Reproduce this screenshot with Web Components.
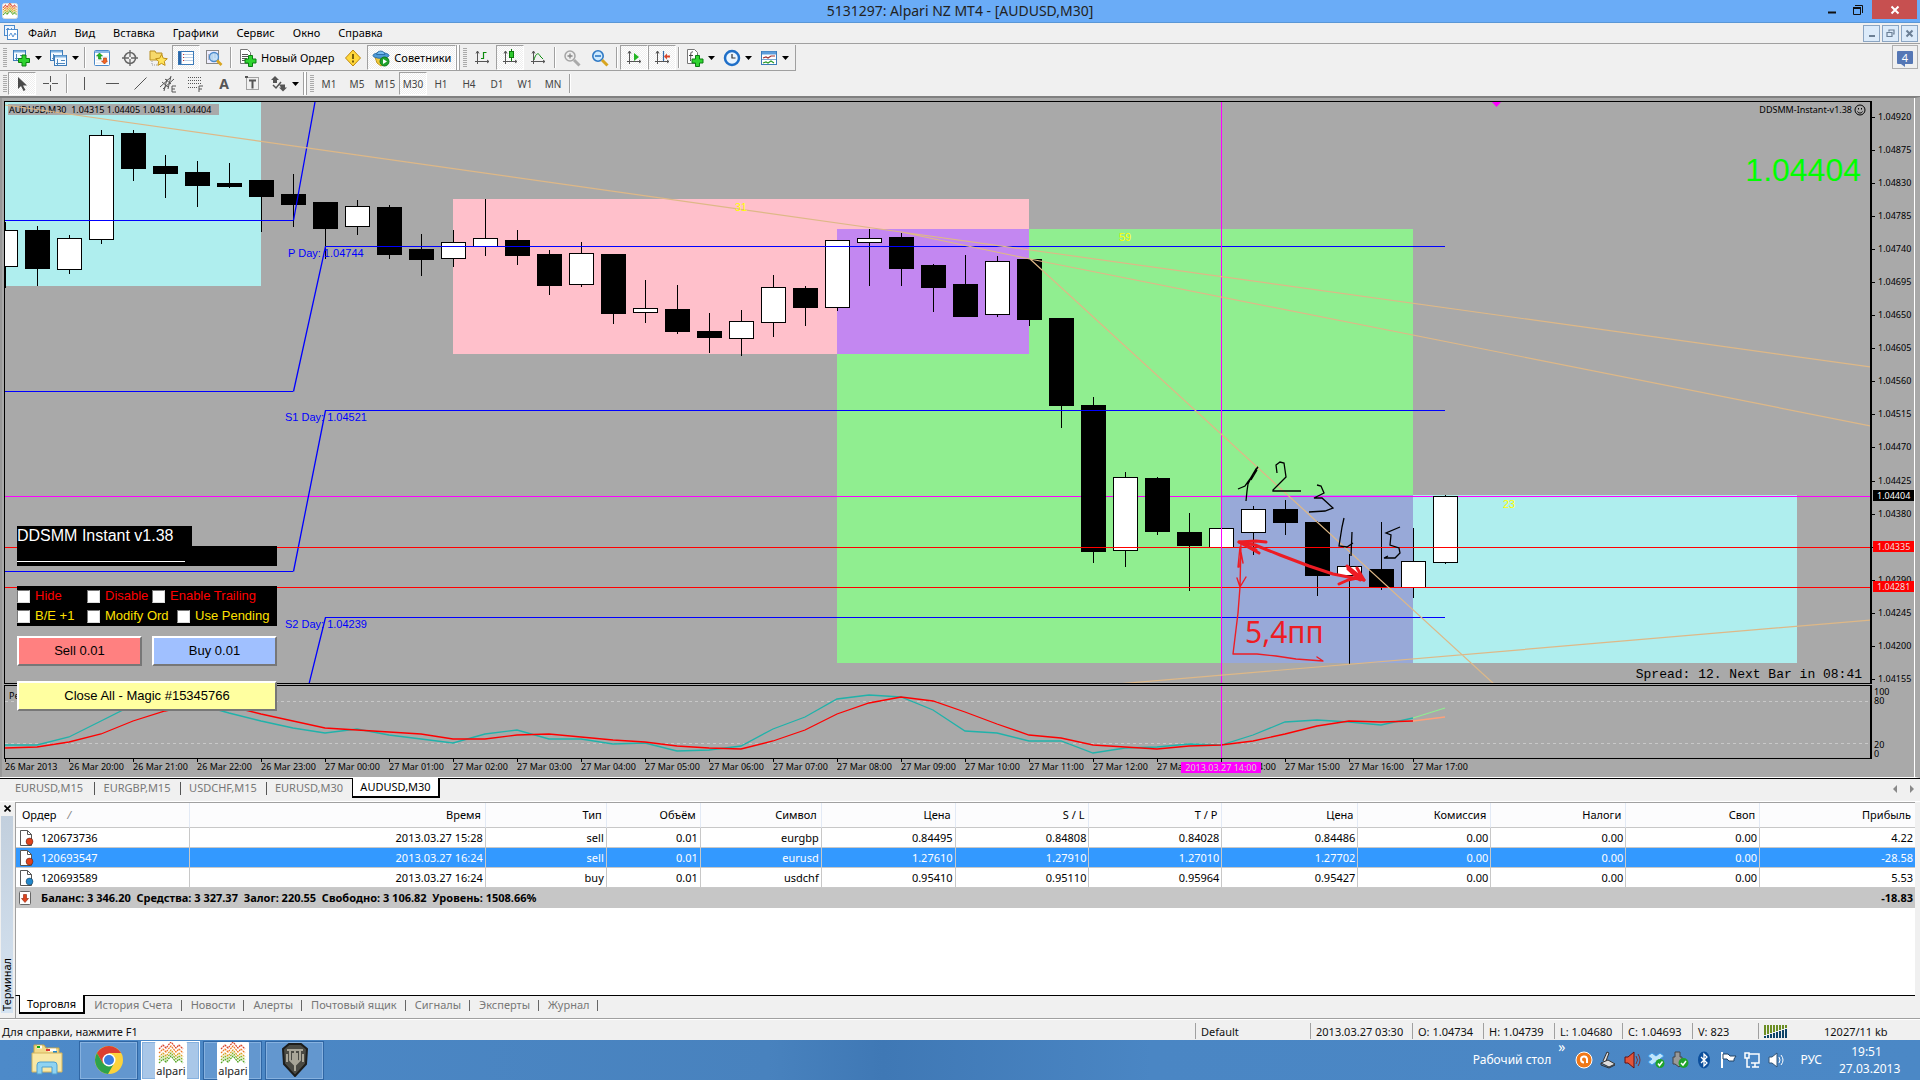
<!DOCTYPE html>
<html lang="ru">
<head>
<meta charset="utf-8">
<title>5131297: Alpari NZ MT4 - [AUDUSD,M30]</title>
<style>
html{height:100%}
body{margin:0;min-height:100%;display:flex;flex-direction:column;background:#f0f0f0;color:#000;font:11px/14px "Noto Sans","Open Sans",sans-serif;overflow:hidden}
trade-terminal{flex:1}
</style>
</head>
<body>
<window-title>5131297: Alpari NZ MT4 - [AUDUSD,M30]</window-title>
<menu-bar></menu-bar>
<main-toolbar></main-toolbar>
<draw-toolbar></draw-toolbar>
<chart-window><expert-panel></expert-panel></chart-window>
<chart-tabs></chart-tabs>
<trade-terminal><orders-table></orders-table></trade-terminal>
<status-bar></status-bar>
<task-bar></task-bar>
<script>
const BASE = `:host,*{box-sizing:border-box}button{font:inherit;color:inherit;background:none;border:0;margin:0;padding:0;cursor:default;white-space:nowrap}svg{display:block;flex:none}`;
function define(name, css, html) {
  customElements.define(name, class extends HTMLElement {
    constructor() {
      super();
      const t = document.createElement('template');
      t.innerHTML = `<style>${BASE}${css}</style>${typeof html === 'function' ? html() : html}`;
      this.attachShadow({mode: 'open'}).append(t.content.cloneNode(true));
    }
  });
}
const svg = (w, h, body, extra = '') => `<svg width="${w}" height="${h}" viewBox="0 0 ${w} ${h}" fill="none" aria-hidden="true" ${extra}>${body}</svg>`;

/* ---------- icons ---------- */
const plus = (x, y) => `<path d="M${x+3} ${y}h4v3.500h3.500v4h-3.500v3.500h-4v-3.500h-3.500v-4h3.500z" fill="#2fd42f" stroke="#0a7d12"/>`;
const win = (x, y) => `<rect x="${x+.5}" y="${y+.5}" width="12" height="10" fill="#f5faff" stroke="#3b7ab8"/><path d="M${x+1} ${y+1.5}h11" stroke="#7fb2e0" stroke-width="2"/><path d="M${x+3.5} ${y+4}v6M${x+2} ${y+8.500}h9M${x+7} ${y+5.500}h4" stroke="#4e87bd"/>`;
const axes = `<path d="M3.500 2v13M1 12.500h14M2 4.500l1.500-2.500 1.500 2.500M13 11l2 1.500-2 1.500" stroke="#555"/>`;
const zig = (y, c, w) => `<path d="M2 ${y+5}l4-4 3 3 5-6 5 6 3-3 4 4" stroke="${c}" stroke-width="${w}" stroke-dasharray="2 .7"/>`;
const ICON = {
  newChart: svg(19,18, win(1,1)+plus(7,6)),
  windows: svg(19,18, win(1,1)+win(5,6)),
  market: svg(18,18, `<rect x="1.500" y="1.500" width="15" height="15" rx="1" fill="#fff" stroke="#4b8acb"/><path d="M2 3h14" stroke="#8dbbe8" stroke-width="2"/><path d="M3 8h12M3 11h12M3 14h12" stroke="#e0e4e8"/><path d="M6.500 4l3 3h-2v2l1 1h-3V7h-2z" fill="#22b922" stroke="#0c7f10" stroke-width=".6"/><path d="M11.500 15l-3-3h2v-3h3v3h1z" fill="#f26522" stroke="#b5340a" stroke-width=".6"/>`),
  target: svg(18,18, `<circle cx="9" cy="9" r="5.500" stroke="#666" stroke-width="1.500"/><path d="M9 1v7M9 10v7M1 9h7M10 9h7" stroke="#666" stroke-width="1.300"/>`),
  folder: svg(19,18, `<path d="M1 2h5l1 2h6v7H1z" fill="#f6d96b" stroke="#b99025"/><path d="M3 12v4h6" stroke="#999" stroke-dasharray="1 1"/><path d="M12.500 5.500l1.800 3.700 4 .5-3 2.700.8 4-3.600-2-3.600 2 .8-4-3-2.700 4-.5z" fill="#ffe45c" stroke="#c09018"/>`),
  navigator: svg(18,18, `<rect x="1.500" y="2.500" width="15" height="13" fill="#fff" stroke="#3b7ab8"/><path d="M3 3v12" stroke="#2a66a8" stroke-width="3"/><path d="M6 5.500h10M6 8.500h10M6 11.500h10" stroke="#b9cfe5"/><path d="M6.500 5v8" stroke="#c33" stroke-dasharray="1 2"/>`),
  tester: svg(18,18, `<rect x="1.500" y="1.500" width="12" height="13" fill="#eef" stroke="#888"/><path d="M4 11V5M7 12V4M10 9V3" stroke="#888"/><circle cx="9" cy="8" r="4.500" fill="#b9dcf7" fill-opacity=".8" stroke="#4b8acb" stroke-width="1.300"/><path d="M12 11.500l4.500 4.500" stroke="#d8a520" stroke-width="2.600"/>`),
  order: svg(18,18, `<path d="M1.500.500h7l3 3v11h-10z" fill="#fff" stroke="#777"/><path d="M3 5.500h6M3 7.500h6M3 9.500h5M3 11.500h3" stroke="#555"/>`+plus(6.5,6.5)),
  warn: svg(18,18, `<path d="M9 1l7.500 8L9 17 1.500 9z" fill="#ffd83b" stroke="#c0880c"/><path d="M9 5v5M9 11.500v2" stroke="#5a4300" stroke-width="1.600"/>`),
  expert: svg(18,18, `<path d="M3 8l2 6 4 3 5-3 1-6z" fill="#f0c83c" stroke="#c39a1e"/><ellipse cx="9" cy="6.500" rx="8" ry="2.800" fill="#4d9ad8" stroke="#2b6ea6"/><path d="M4.500 5.500C5 1 12.500 1 13 5.500z" fill="#76bdf0" stroke="#2b6ea6"/><circle cx="12.500" cy="12.500" r="4.500" fill="#1fa32b" stroke="#0d7a18"/><path d="M11 10l4 2.500-4 2.500z" fill="#fff"/>`),
  bars: svg(17,17, axes+`<path d="M9.500 3v7M9.500 3.500h3M7 9.500h2.500" stroke="#0b8a0b" stroke-width="1.200"/>`),
  candles: svg(17,17, axes+`<path d="M9.500 0v12" stroke="#0b7a0b"/><rect x="7.500" y="2.500" width="4" height="6" fill="#2ec82e" stroke="#0b7a0b"/>`),
  line: svg(17,17, axes+`<path d="M4 11c2-8 5-7 6-4l3 3" stroke="#0b8a0b"/>`),
  zoomIn: svg(18,18, `<circle cx="7" cy="7" r="5" fill="#eee" stroke="#a5a5a5" stroke-width="1.500"/><path d="M4.500 7h5M7 4.500v5" stroke="#888" stroke-width="1.300"/><path d="M11 11l5.500 5.500" stroke="#aaa" stroke-width="3"/>`),
  zoomOut: svg(18,18, `<circle cx="7" cy="7" r="5.200" fill="#cdeaff" stroke="#2f79c4" stroke-width="1.600"/><path d="M4 7h6" stroke="#2f79c4" stroke-width="1.600"/><path d="M11 11l5.500 5.500" stroke="#d8a520" stroke-width="3"/>`),
  scroll: svg(17,17, axes+`<path d="M8 4l5 4-5 4z" fill="#23b623"/>`),
  shift: svg(17,17, axes+`<path d="M9.500 2v10" stroke="#336ba8" stroke-width="1.200"/><path d="M10 7.500l3-3v2h3v2h-3v2z" fill="#d8442a"/>`),
  indicator: svg(18,18, `<path d="M1.500.500h7l3 3v11h-10z" fill="#fff" stroke="#777"/><path d="M7 3c-3-1-2 3-2.500 9M3 6.500h4" stroke="#444"/>`+plus(6.5,6.5)),
  clock: svg(18,18, `<circle cx="9" cy="9" r="7" fill="#eaf5ff" stroke="#1f6fc8" stroke-width="2.500"/><path d="M9 5v4h3.500" stroke="#333" stroke-width="1.200"/>`),
  template: svg(18,18, `<rect x="1.500" y="2.500" width="15" height="13" fill="#fff" stroke="#3b7ab8"/><path d="M2 4h14" stroke="#5d9ddb" stroke-width="3"/><path d="M3 9l3-1 2 1 3-2 4 0" stroke="#a03030" stroke-width="1.200"/><path d="M2 10.500h14" stroke="#7aa7d2"/><path d="M3 14l3-1 2 1 3-2 3 2" stroke="#2a9a2a" stroke-width="1.200"/>`),
  cursor: svg(16,18, `<path d="M4 2v12l3-3 2.500 5 2-1L9 10.500h4z" fill="#4a4a4a"/>`),
  cross: svg(17,17, `<path d="M8.500 1v6M8.500 10v6M1 8.500h6M10 8.500h6" stroke="#555"/>`),
  vline: svg(17,17, `<path d="M8.500 2v13" stroke="#555"/>`),
  hline: svg(17,17, `<path d="M2 8.500h13" stroke="#555"/>`),
  tline: svg(17,17, `<path d="M2.500 14.500l12-12" stroke="#555"/>`),
  channel: svg(19,18, `<path d="M1 12l11-10M4 14L15 4M3 7l6 5M6 4l6 5M5 16l3-12M9 14l3-13" stroke="#555"/><path d="M17 11h-4v6h4M13 14h3" stroke="#555"/>`),
  fibo: svg(18,18, `<path d="M1 2.500h14M1 5.500h14M1 8.500h14M1 12.500h9" stroke="#555" stroke-dasharray="1 1"/><path d="M16 11h-4v6M12 14h3" stroke="#555"/>`),
  label: svg(17,17, `<rect x="2.500" y="2.500" width="12" height="12" stroke="#555" stroke-dasharray="1 1"/><path d="M5 5.500h7M8.500 5.500v8" stroke="#555" stroke-width="2"/><path d="M1 1h3v2H1z" fill="#555"/>`),
  shapes: svg(18,18, `<path d="M1 5l4-4 4 4-2 0v3H3V5zM9 9.500h3v0h3v3l2 0-4 4-4-4h2z" fill="#555"/><path d="M3 10l3 3 5-6" stroke="#555" stroke-width="1.500"/>`),
  appSmall: svg(16,16, `<rect x=".5" y=".5" width="15" height="15" rx="2" fill="#fff" stroke="#ddd"/><g transform="translate(0 1) scale(.57 .6)">${zig(1,'#d8442a',2)}${zig(5,'#ee8822',2)}${zig(9,'#c9b020',2)}${zig(13,'#55a520',2)}</g>`),
};
const CARET = svg(7,4,`<path d="M0 0h7L3.500 4z" fill="#000"/>`);
const TB = `
:host{display:flex;align-items:stretch;background:#f0f0f0;border-bottom:1px solid #a0a0a0}
.g{width:4px;margin:3px 1px 3px 3px;background:repeating-linear-gradient(#aaa 0 1px,#f0f0f0 1px 2px)}
.s{width:2px;margin:2px 2px;border-left:1px solid #a0a0a0;border-right:1px solid #fff}
.d{width:4px;border:solid #a0a0a0;border-width:0 1px;background:#fff}
button{display:flex;align-items:center;justify-content:center;gap:4px;width:28px;padding:0 1px;border:1px solid transparent;font-size:11px}
button.m{width:37px}
button.on{background:repeating-conic-gradient(#fff 0 25%,#eee 0 50%) 0 0/2px 2px;border-color:#a0a0a0 #fff #fff #a0a0a0}
button.w{width:auto;padding:0 4px}`;
const btn = (n, label, c = '') => `<button type="button" class="${c}" aria-label="${label}">${ICON[n]}${c.includes('m') ? CARET : ''}</button>`;
const wide = (n, t, c = '') => `<button type="button" class="w ${c}">${ICON[n]}${t}</button>`;
const G = '<span class="g"></span>', S = '<span class="s"></span>', D = '<span class="d"></span>';

define('window-title', `
:host{display:grid;grid-template-columns:1fr auto 1fr;height:23px;background:#6aacf7;border-bottom:1px solid #5a97d6;color:#222;font-size:14px;line-height:22px}
.i{padding:3px 2px}.c{display:flex;justify-content:flex-end;padding-right:3px}
.c button{width:26px;height:19px;display:grid;place-items:center}.c .x{width:45px;background:#c75050;margin-left:1px}`,
`<span class="i">${ICON.appSmall}</span><slot></slot><span class="c"><button aria-label="Minimize">${svg(10,10,'<path d="M1 7.500h8" stroke="#111" stroke-width="2"/>')}</button><button aria-label="Restore">${svg(12,12,'<path d="M3 1.500h7.500V9M1.500 3.500h7v7h-7z" stroke="#111"/><path d="M1 4h8" stroke="#111" stroke-width="2"/>')}</button><button class="x" aria-label="Close">${svg(10,10,'<path d="M1.500 1.500l7 7M8.500 1.500l-7 7" stroke="#fff" stroke-width="2"/>')}</button></span>`);

define('menu-bar', `
:host{display:flex;align-items:center;height:21px;border-bottom:1px solid #a0a0a0;font-size:11px;background:#f0f0f0}
.i{padding:0 1px 0 4px}nav{display:flex;flex:1}nav button{padding:0 9px;line-height:18px}
.c{display:flex;gap:2px;padding-right:2px}.c button{width:17px;height:17px;border:1px solid #8ba5c2;background:#dcebfa;display:grid;place-items:center}`,
`<span class="i">${svg(14,16,'<rect x=".5" y=".5" width="10" height="10" fill="#eef6ff" stroke="#4b8acb"/><rect x="3.500" y="4.500" width="10" height="10" fill="#fff" stroke="#4b8acb"/><path d="M2 5l2-2 2 2 2-2M5 11l2-3 2 4 2-4 1 2" stroke="#5a94d4"/>')}</span><nav>${['Файл','Вид','Вставка','Графики','Сервис','Окно','Справка'].map(t=>`<button type="button">${t}</button>`).join('')}</nav><span class="c"><button aria-label="Minimize chart">${svg(9,9,'<path d="M2 7h6" stroke="#6b7f95" stroke-width="2"/>')}</button><button aria-label="Restore chart">${svg(9,9,'<path d="M3 2.500V1h5v4H7M1 3.500h5v4H1z" stroke="#6b7f95" stroke-width="1.200"/>')}</button><button aria-label="Close chart">${svg(9,9,'<path d="M1.500 1.500l6 6M7.500 1.500l-6 6" stroke="#6b7f95" stroke-width="2"/>')}</button></span>`);

define('main-toolbar', TB + `:host{height:27px;padding-top:1px;border-bottom:0}
.r{display:flex;border-bottom:1px solid #a0a0a0;border-right:1px solid #a0a0a0;padding-right:2px}.f{flex:1;border-bottom:1px solid transparent}
.chat{width:26px;height:24px;margin:0 2px 0 0;padding:0;border:1px solid #b0b0b0}
.chat span{background:#5577b5;color:#fff;width:16px;height:13px;line-height:13px;font-size:11px;border-radius:1px;position:relative}
.chat span::after{content:"";position:absolute;left:4px;top:13px;border:solid transparent;border-width:0 0 4px 4px;border-right-color:#5577b5;border-top:3px solid #5577b5}`,
`<div class="r">${G}${btn('newChart','New chart','m')}${btn('windows','Profiles','m')}${S}${btn('market','Market watch')}${btn('target','Data window')}${btn('folder','Navigator')}${btn('navigator','Terminal','on')}${btn('tester','Tester')}${S}${wide('order','Новый Ордер')}${btn('warn','Editor')}${wide('expert','Советники','on')}${D}${G}${btn('bars','Bars')}${btn('candles','Candles','on')}${btn('line','Line')}${S}${btn('zoomIn','Zoom in')}${btn('zoomOut','Zoom out')}${S}${btn('scroll','Auto scroll','on')}${btn('shift','Shift','on')}${S}${btn('indicator','Indicators','m')}${btn('clock','Periods','m')}${btn('template','Templates','m')}</div><span class="f"></span><button class="chat" type="button"><span>4</span></button>`);

define('draw-toolbar', TB + `:host{height:26px;padding:1px 0 1px;border-bottom-color:#808080}.t button{font-size:10px;color:#444}.t{display:flex}b{font-size:14px;color:#555}`,
`${G}${btn('cursor','Cursor','on')}${btn('cross','Crosshair')}${S}${btn('vline','Vertical')}${btn('hline','Horizontal')}${btn('tline','Trend line')}${btn('channel','Channel')}${btn('fibo','Fibonacci')}<button type="button"><b>A</b></button>${btn('label','Label')}${btn('shapes','Arrows','m')}${D}${G}<div class="t">${['M1','M5','M15','M30','H1','H4','D1','W1','MN'].map(t=>`<button type="button" class="${t==='M30'?'on':''}">${t}</button>`).join('')}</div>${S}`);

/* ---------- chart ---------- */
// [bullish, top, bottom, high, low], one candle each 32px
const CANDLES = [[1,230,266,222,287],[0,230,268,226,285],[1,238,269,235,273],[1,135,239,130,243],[0,133,168,130,180],[0,166,173,155,197],[0,172,185,161,206],[0,183,186,163,187],[0,180,196,180,231],[0,194,204,174,226],[0,202,228,202,258],[1,206,226,200,234],[0,207,254,205,258],[0,249,259,234,275],[1,242,258,230,266],[1,238,246,199,255],[0,240,255,230,264],[0,254,285,250,294],[1,253,284,242,286],[0,254,313,254,323],[1,308,312,280,322],[0,309,331,285,333],[0,331,337,313,352],[1,321,338,310,355],[1,287,322,275,336],[0,288,307,286,325],[1,240,307,240,310],[1,238,242,229,285],[0,237,268,233,285],[0,265,287,264,311],[0,284,316,255,316],[1,261,314,256,316],[0,259,319,259,325],[0,318,405,318,427],[0,405,551,397,562],[1,477,550,472,566],[0,478,531,477,534],[0,532,545,513,590],[1,528,547,528,547],[1,509,532,506,554],[0,509,522,500,534],[0,522,575,521,595],[1,566,575,554,663],[0,569,587,522,589],[1,561,587,528,597],[1,496,562,495,563]];
const candle = ([up,t,b,h,l], k) => { const x = 5 + 32*k;
  return `<path d="M${x+.5} ${h}V${l+1}" stroke="#000"/><rect x="${x-12+.5}" y="${t+.5}" width="24" height="${Math.max(b-t,2)}" fill="${up?'#fff':'#000'}" stroke="#000"/>`; };
const K = [745,745,737,721,705,700,704,713,721,728,733,729,735,739,743,734,730,739,739,744,743,751,750,746,729,717,699,695,697,710,731,733,741,741,753,748,747,744,745,735,722,720,722,725,718];
const R = [748,747,742,734,721,711,704,706,714,721,728,730,732,734,739,739,735,734,737,740,742,746,748,749,741,730,714,703,697,701,712,724,735,738,745,747,749,746,745,741,734,726,721,722,721];
const poly = (a, c) => `<polyline points="${a.map((y,k)=>`${5+32*k},${y}`).join(' ')}" stroke="${c}" stroke-width="1.300"/>`;
const rect = (x,y,X,Y,c) => `<rect x="${x}" y="${y}" width="${X-x}" height="${Y-y}" fill="${c}"/>`;
const PLOT = `<g transform="translate(-5 -102)">
${rect(5,102,261,286,'#afeeee')}${rect(453,199,1029,354,'#ffc0cb')}${rect(837,229,1413,663,'#90ee90')}${rect(837,229,1029,354,'#c387f1')}${rect(1221,495,1413,663,'#98a9d8')}${rect(1413,495,1797,663,'#afeeee')}
${rect(8,104,219,115,'#a9a9a9')}
<path d="M5 496.500H4000" stroke="#f0f" shape-rendering="crispEdges"/>
<g shape-rendering="crispEdges">${CANDLES.map(candle).join('')}</g>
<text x="9" y="113" xml:space="preserve">AUDUSD,M30  1.04315 1.04405 1.04314 1.04404</text>
<g stroke="#00f"><path shape-rendering="crispEdges" d="M5 220.500H293M5 391.500H293M5 571.500H293M325 246.500H1445M325 410.500H1445M325 617.500H1445"/><path stroke-width="1.300" d="M293.500 220.500L315 102M293.500 391.500L325.500 246.500M293.500 571.500L325.500 410.500M309 684L325.500 617.500"/></g>
<g shape-rendering="crispEdges"><path d="M5 547.500H4000M5 587.500H4000" stroke="#f00"/><path d="M1221.500 102V684" stroke="#f0f"/></g>
<path d="M5 105L901 232L1871 367M901 232L1030 259L1871 426M1030 259L1494 684M1117 684L1871 620" stroke="#deb887" stroke-width="1.200"/>
<g class="a" fill="#00f"><text x="288" y="257">P Day: 1.04744</text><text x="285" y="421">S1 Day: 1.04521</text><text x="285" y="628">S2 Day: 1.04239</text></g>
<g class="a" fill="#ff0"><text x="735" y="211">31</text><text x="1119" y="241">59</text><text x="1503" y="508">23</text></g>
<path d="M1492 102h9l-4.500 5z" fill="#f0f"/>
<g stroke="#000" stroke-width="1.300"><path d="M1238 489l7-3 5-7 6-10 2-2-5 7-5 10-1 7-1 10M1251 480l6-10M1277 473l-1-8 4-3 4 1 2 14-13 13v1h28M1317 485l4 1 3 7-10 5h8l11 10-8 3-16 1M1344 518l-2 9-3 19 8 1 6-4M1352 532l-1 24M1400 527l-14 6 5 2-1 10 9 3 1 5-5 5-11 0 4-2"/></g>
<g stroke="#ed1c24" stroke-linejoin="round" stroke-linecap="round"><path stroke-width="3" d="M1239 542l16 3 25 10 29 11 24 8 31 6"/><path stroke-width="3" d="M1266 542l-10-1-17 1 20 11M1242 543l14 7M1347 566l17 14-7-12M1348 569l12 11M1362 577l-14 3-9 4"/><path stroke-width="1.400" d="M1241 543l-1 44-2 26-5 41 24 0 19 2 20 3 27 2-6-4M1238 567l2-20 3 16M1237 578l3 9 6-10M1239 557v10"/></g>
<text x="1245" y="643" style="font-size:30px" fill="#ed1c24">5,4пп</text></g>`;
const PRICES = ['1.04920','1.04875','1.04830','1.04785','1.04740','1.04695','1.04650','1.04605','1.04560','1.04515','1.04470','1.04425','1.04380','1.04335','1.04290','1.04245','1.04200','1.04155'];
const TIMES = ['26 Mar 2013','26 Mar 20:00','26 Mar 21:00','26 Mar 22:00','26 Mar 23:00',...Array.from({length:18},(_,i)=>`27 Mar ${String(i).padStart(2,'0')}:00`)];
define('chart-window', `
:host{display:grid;position:relative;grid-template-columns:1fr 43px;background:#a9a9a9;padding:3px 0 1px 4px;border-top:1px solid #808080;border-right:5px solid #a9a9a9;border-bottom:1px solid #fff;font-size:9px;line-height:10px;box-shadow:inset 2px 0 #989898,inset -1px 0 #fff}
.p{border:1px solid #000;border-right-width:2px;position:relative;overflow:hidden}
.p svg{width:100%}text{font-family:"Noto Sans",sans-serif;font-size:9px;fill:#000}.a text{font-family:"Liberation Sans",sans-serif;font-size:11px;fill:inherit}text[fill]{fill:#ed1c24}
.main{height:583px}.ind{height:74px;margin-top:1px}
.ax{display:flex;flex-direction:column;justify-content:space-between;padding-top:11px;position:relative}
.ax span{padding-left:6px;position:relative}.ax span::before{content:"";position:absolute;left:0;top:5px;width:3px;border-top:1px solid #000}
.ax b{position:absolute;left:1px;width:41px;height:11px;padding-left:4px;font-weight:400;line-height:11px;color:#fff;background:#000}.ax b.r{background:#f00;color:#edd}
.ia{display:flex;flex-direction:column;justify-content:space-between;padding:2px 0 1px 2px;margin-top:1px}.ia span{display:block;line-height:9px}
.t{grid-column:1/3;display:flex;height:17px;position:relative;padding-left:1px}
.t span{width:64px;flex:none;padding-top:3px;border-left:1px solid #000;border-image:linear-gradient(#000 0 4px,transparent 4px) 1;white-space:nowrap;text-indent:-1px}
.t b{position:absolute;left:1177px;top:3px;width:80px;height:11px;background:#f0f;color:#dcc;font-weight:400;text-align:center;line-height:11px}
.ea{position:absolute;right:4px;top:2px;display:flex;gap:2px;align-items:center;font-size:10px;line-height:12px}
.ea>span{font-size:9px}.p .ea svg{width:12px}
.big{position:absolute;right:9px;top:50px;font:32px/36px "Liberation Sans",Arial,sans-serif;color:#0f0}
.sp{position:absolute;right:8px;bottom:1px;font:13px/15px "Liberation Mono",monospace}
.pe{position:absolute;left:4px;top:5px}
::slotted(expert-panel){position:absolute;left:17px;top:428px}`,
() => `<div class="p main"><svg height="581" fill="none">${PLOT}</svg><span class="ea"><span>DDSMM-Instant-v1.38</span>${svg(12,12,'<circle cx="6" cy="6" r="5" stroke="#000"/><path d="M3.500 7.500c1 2 4 2 5 0" stroke="#000"/><path d="M4 4h1v1.500H4zM7 4h1v1.500H7z" fill="#000"/>')}</span><span class="big">1.04404</span><span class="sp">Spread: 12. Next Bar in 08:41</span></div>
<div class="ax">${PRICES.map(p=>`<span>${p}</span>`).join('')}<b style="top:389px">1.04404</b><b class="r" style="top:440px">1.04335</b><b class="r" style="top:480px">1.04281</b></div>
<div class="p ind"><svg height="72" fill="none"><g transform="translate(-5 -686)"><path d="M5 701.500H4000M5 743.500H4000" stroke="#c8c8c8" stroke-dasharray="3 3"/>${poly(K,'#20b2aa')}${poly(R,'#f00')}<path d="M1413 718l32-10" stroke="#90ee90" stroke-width="1.300"/><path d="M1413 721l32-4" stroke="#ffa07a" stroke-width="1.300"/><path d="M1221.500 684V760" stroke="#f0f"/></g></svg><span class="pe">Pe</span></div>
<div class="ia"><div><span>100</span><span>80</span></div><div><span>20</span><span>0</span></div></div>
<div class="t">${TIMES.map(t=>`<span>${t}</span>`).join('')}<b>2013.03.27 14:00</b></div><slot></slot>`);

define('expert-panel', `
:host{display:block;width:260px;font:13px/20px "Liberation Sans",Arial,sans-serif}
h2{margin:0;width:175px;height:20px;background:#000;color:#fff;font-size:16px;font-weight:400;line-height:19px}
.b{height:20px;background:#000;padding-top:15px}.b hr{margin:0;width:168px;border:0;border-top:1px solid #fff}
.k{margin:20px 0 10px;background:#000;color:#f00}.k div{display:flex;height:20px;align-items:center}.k div+div{color:#ffe000}
label{display:flex;align-items:center;gap:5px;width:70px;flex:none;white-space:nowrap}label.n{width:65px}label.o{width:90px}label:last-child{width:auto}
input{appearance:none;flex:none;width:13px;height:13px;margin:0;background:#fff;border:1px solid;border-color:#777 #ddd #ddd #777}
.q{display:flex;gap:10px}.q button,.c{flex:1;height:30px;border:2px solid;border-color:#fff #777 #777 #fff;background:#ff8080;text-align:center}.q .y{background:#a0c0ff}.c{display:block;width:100%;margin-top:15px;background:#ffffa0}`,
`<h2>DDSMM Instant v1.38</h2><div class="b"><hr></div>
<div class="k"><div><label><input type="checkbox">Hide</label><label class="n"><input type="checkbox">Disable</label><label><input type="checkbox">Enable Trailing</label></div><div><label><input type="checkbox">B/E +1</label><label class="o"><input type="checkbox">Modify Ord</label><label><input type="checkbox">Use Pending</label></div></div>
<div class="q"><button type="button">Sell 0.01</button><button type="button" class="y">Buy 0.01</button></div><button type="button" class="c">Close All - Magic #15345766</button>`);

define('chart-tabs', `
:host{display:flex;height:24px;padding:0 6px 3px 4px;border-top:1px solid #000;border-bottom:1px solid #fff;color:#777;align-items:stretch}
button{width:86px;position:relative;padding-bottom:1px}button:not(.on):not(.l)::after{content:"";position:absolute;right:-1px;top:3px;height:13px;border-right:1px solid #555}
.on{background:#fff;color:#000;border:solid #000;border-width:0 2px 2px 1px;margin-top:-1px;width:88px}.f{flex:1}.ar{display:flex;gap:13px;align-items:center}`,
`<button style="width:90px">EURUSD,M15</button><button>EURGBP,M15</button><button>USDCHF,M15</button><button class="l">EURUSD,M30</button><button class="on">AUDUSD,M30</button><span class="f"></span><span class="ar">${svg(4,8,'<path d="M4 0v8L0 4z" fill="#888"/>')}${svg(4,8,'<path d="M0 0v8l4-4z" fill="#888"/>')}</span>`);

define('trade-terminal', `
:host{display:grid;grid-template-columns:15px 1fr 5px;grid-template-rows:1fr auto;border-bottom:1px solid #a0a0a0;min-height:216px}
.l{grid-row:1/3;display:flex;flex-direction:column;align-items:center;padding:2px 2px 5px 1px}
.l button{height:9px;margin-bottom:3px}.v{flex:1;width:12px;background:linear-gradient(#d5e3f1,#c2cfdd);writing-mode:vertical-rl;transform:rotate(180deg);line-height:12px;text-align:left;padding-top:2px;font-size:11px}
.m{background:#fff;border-top:1px solid #a0a0a0;border-left:1px solid #a0a0a0;border-bottom:1px solid #000}
nav{display:flex;height:22px;padding:0 0 4px 3px;color:#777;border-left:1px solid #a0a0a0}
nav button{padding:0 9px;position:relative}nav button::after{content:"";position:absolute;right:0;top:4px;height:11px;border-right:1px solid #666}
nav .on{background:#fff;color:#000;border:solid #000;border-width:0 2px 2px 1px;margin-top:-1px;padding:0 7px}nav .on::after{display:none}`,
`<div class="l"><button aria-label="Close terminal">${svg(7,7,'<path d="M.5.500l6 6M6.500.500l-6 6" stroke="#000" stroke-width="1.600"/>')}</button><div class="v">Терминал</div></div><div class="m"><slot></slot></div><span></span><nav><button class="on">Торговля</button>${['История Счета','Новости','Алерты','Почтовый ящик','Сигналы','Эксперты','Журнал'].map(t=>`<button>${t}</button>`).join('')}</nav>`);

const doc = c => svg(16,16,`<path d="M1.500.500h7l4 4v11h-11z" fill="#fff" stroke="#555"/><path d="M8.500.500v4h4" stroke="#555"/><circle cx="10.500" cy="11.500" r="3.500" fill="${c}" stroke="#0005"/>`);
const ROWS = [['120673736','2013.03.27 15:28','sell','0.01','eurgbp','0.84495','0.84808','0.84028','0.84486','0.00','0.00','0.00','4.22'],['120693547','2013.03.27 16:24','sell','0.01','eurusd','1.27610','1.27910','1.27010','1.27702','0.00','0.00','0.00','-28.58'],['120693589','2013.03.27 16:24','buy','0.01','usdchf','0.95410','0.95110','0.95964','0.95427','0.00','0.00','0.00','5.53']];
define('orders-table', `
:host{display:block}table{width:100%;table-layout:fixed;border-collapse:separate;border-spacing:0}
th{height:25px;font-weight:400;text-align:right;padding:0 4px 0 6px;border-right:1px solid #e3eaf5;border-bottom:1px solid #c8c8c8;background:#fcfcfd}
td{height:20px;text-align:right;padding:0 2px 0 3px;border-right:1px solid #c8c8c8;border-bottom:1px solid #c8c8c8;white-space:nowrap}
th:first-child,td:first-child{text-align:left}th:last-child,td:last-child{border-right:0}
td div{display:flex;align-items:center;gap:6px}.sel td{background:#39f;color:#fff}.sum td{background:#c6c6c6;font-weight:700;border-color:#c6c6c6}.sum div{gap:9px}.sum span{white-space:pre}
i{color:#888;padding-left:8px}`,
`<table><colgroup>${[174,296,121,94,121,134,134,133,136,133,135,134].map(w=>`<col style="width:${(w/19).toFixed(2)}%">`).join('')}<col></colgroup><thead><tr>${['Ордер <i>/</i>','Время','Тип','Объём','Символ','Цена','S / L','T / P','Цена','Комиссия','Налоги','Своп','Прибыль'].map(t=>`<th>${t}</th>`).join('')}</tr></thead><tbody>${ROWS.map((r,i)=>`<tr class="${i===1?'sel':''}">${r.map((c,j)=>j?`<td>${c}</td>`:`<td><div>${doc(i===2?'#2288cc':'#e0421c')}${c}</div></td>`).join('')}</tr>`).join('')}<tr class="sum"><td colspan="12"><div>${svg(13,14,'<rect x=".5" y=".5" width="11" height="13" rx="1" fill="#fff" stroke="#666"/><path d="M6 11.500L2.500 7.500h2v-4h3v4h2z" fill="#e0421c" stroke="#8a2008" stroke-width=".6"/>')}<span>Баланс: 3 346.20  Средства: 3 327.37  Залог: 220.55  Свободно: 3 106.82  Уровень: 1508.66%</span></div></td><td>-18.83</td></tr></tbody></table>`);

define('status-bar', `
:host{display:flex;height:21px;border-top:1px solid #fff;line-height:20px;padding-left:2px;color:#111}
span{flex:none;border-left:1px solid #a0a0a0;padding-left:5px;margin:3px 0 1px;line-height:17px}.f{flex:1;border:0;padding:0}`,
`<span class="f">Для справки, нажмите F1</span><span style="width:115px">Default</span><span style="width:102px">2013.03.27 03:30</span><span style="width:71px">O: 1.04734</span><span style="width:71px">H: 1.04739</span><span style="width:68px">L: 1.04680</span><span style="width:70px">C: 1.04693</span><span style="width:66px">V: 823</span><span style="width:66px;padding-top:2px">${svg(24,13,Array.from({length:8},(_,i)=>`<path d="M${i*3+1} 0V${10-i}" stroke="#6b8e23" stroke-width="2"/><path d="M${i*3+1} ${11-i}V13" stroke="#0d4468" stroke-width="2"/>`).join(''))}</span><span style="width:96px;border:0;padding:0">12027/11 kb</span>`);

const alpari = svg(32,38,`<rect width="32" height="38" rx="1" fill="#fff"/><g transform="translate(2 0)">${zig(2,'#d8442a',1.2)}${zig(6,'#ee7722',1.2)}${zig(10,'#d9a020',1.2)}${zig(13,'#86b020',1.2)}${zig(16,'#55a520',1.2)}</g><text x="16" y="33" text-anchor="middle" font-family="Noto Sans,sans-serif" font-size="11" fill="#222">alpari</text>`);
const explorer = svg(34,32,`<path d="M4 1h10l2 3h13v22H4z" fill="#f1d98a" stroke="#c9a64a"/><path d="M7 3h5M18 6h8" stroke="#fff" stroke-width="3"/><path d="M7 3h3" stroke="#1a1" stroke-width="2"/><path d="M16 6h4" stroke="#d33" stroke-width="2"/><path d="M23 8h4" stroke="#28c" stroke-width="2"/><path d="M2 9h30v19H2z" fill="#f9e8a6" stroke="#d3b45c"/><path d="M7 30v-9q0-3 3-3h14q3 0 3 3v9h-5v-7H12v7z" fill="#8fd3f2" stroke="#4f9fcf"/>`);
const chrome = svg(30,30,`<circle cx="15" cy="15" r="14" fill="#fdd33c"/><path d="M2.900 8A14 14 0 0 1 27.100 8H15L9 18.500z" fill="#dc3f31"/><path d="M2.900 8A14 14 0 0 0 14 29l6-10.500H9z" fill="#2ea24a"/><circle cx="15" cy="15" r="6.500" fill="#fff"/><circle cx="15" cy="15" r="5" fill="#3a7de0"/>`);
const tanks = svg(26,34,`<path d="M7 1h12l6 5-1 15-11 12L2 21 1 6z" fill="#4a4a44" stroke="#1d1d1b" stroke-width="2"/><path d="M5 7h16M8 7v10l3 3V10M18 7v10l-3 3V10M13 8v20M5 11v8M21 11v8" stroke="#a8a598" stroke-width="2"/>`);
const TRAY = [
  '<circle cx="9" cy="9" r="8" fill="#f07818" stroke="#fff"/><path d="M12 12V8a3 3 0 1 0-3 3.500" stroke="#fff" stroke-width="2"/>',
  '<path d="M2 12l8 4 6-3-7-4zM4 10L8 1l2 1-3 8" fill="#ddd" stroke="#333"/><path d="M2 12v2l8 3 6-3" stroke="#333"/>',
  '<path d="M2 6h3l6-5v16l-6-5H2z" fill="#e2553a" stroke="#611"/><path d="M13 5q3 4 0 8M15 3q4 6 0 12" stroke="#803030"/>',
  '<path d="M1 5l4-3 4 3 4-3 4 3-4 3 4 3-4 3-4-3-4 3-4-3 4-3z" fill="#bfe4fb" stroke="#3d9ae8"/><circle cx="13" cy="12.500" r="4.500" fill="#1fa32b"/><path d="M11 12.500l1.500 2 3-4" stroke="#fff" stroke-width="1.500"/>',
  '<path d="M4 1h5v5h2v7l-3 3-4-3H2V6h2z" fill="#999" stroke="#444"/><circle cx="12.500" cy="12" r="5" fill="#1fa32b"/><path d="M10 12l2 2 3-4" stroke="#fff" stroke-width="1.500"/>',
  '<ellipse cx="9" cy="9" rx="6" ry="8.500" fill="#0b4e9c"/><path d="M6 6l6 6-3 3V3l3 3-6 6" stroke="#fff" stroke-width="1.300"/>',
  '<path d="M3 1v16" stroke="#fff" stroke-width="2"/><path d="M4 3h5l2 2h6l-2 3 0 2h-5L8 8H4z" fill="#fff" stroke="#246"/>',
  '<path d="M6 3h10v9H8M9 16h7M12 12v4" stroke="#fff" stroke-width="1.500"/><path d="M2 2h4v5H2zM4 7v9h3" stroke="#fff" stroke-width="1.500"/>',
  '<path d="M2 6h3l5-4v14l-5-4H2z" fill="#fff" stroke="#357"/><path d="M12 6q2 3 0 6M14 4q4 5 0 10" stroke="#fff"/>'];
define('task-bar', `
:host{display:flex;align-items:center;height:40px;background:linear-gradient(90deg,#4d8ac9,#4882be 40%,#3f78b5 46%,#4a86c4 60%,#4b88c6);color:#fff;font-size:12px;padding-left:17px}
button{width:59px;height:39px;display:grid;place-items:center;border:1px solid #2f66a4;box-shadow:inset 0 0 0 1px #86b1df;background:#6397cf;margin-right:3px}
button.e{border:0;box-shadow:none;background:none}button.on{border-color:#fff;background:#a9c7e8}.f{flex:1}
.r{display:flex;align-items:center}.r sup{align-self:flex-start;margin:-2px 10px 0 7px;font-size:14px;line-height:12px}.ic{display:flex;gap:6px;margin-right:15px}.ck{text-align:center;line-height:17px;width:55px;margin:0 26px 0 17px}`,
`<button class="e" aria-label="Explorer">${explorer}</button><button aria-label="Chrome">${chrome}</button><button class="on" aria-label="Alpari">${alpari}</button><button aria-label="Alpari">${alpari}</button><button aria-label="World of Tanks">${tanks}</button><span class="f"></span><div class="r"><span>Рабочий стол</span><sup>»</sup><span class="ic">${TRAY.map(t=>svg(18,18,t)).join('')}</span><span>РУС</span><div class="ck">19:51<br>27.03.2013</div></div>`);
</script>
</body>
</html>
